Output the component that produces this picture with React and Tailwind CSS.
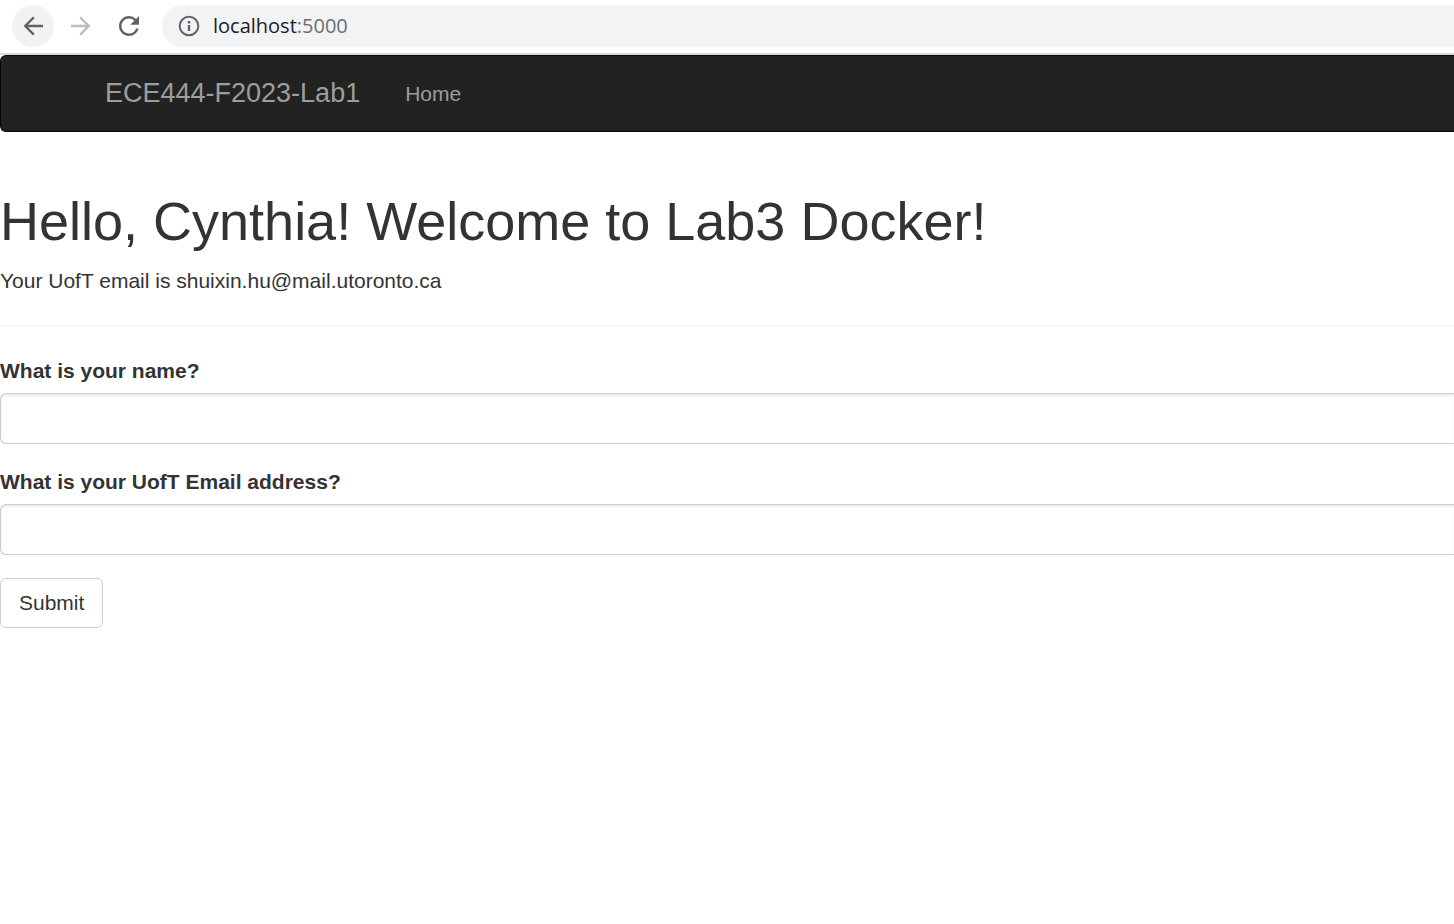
import React from "react";
import { MdRefresh } from "react-icons/md";

function Arrow({ flipped }) {
  return (
    <svg
      viewBox="0 0 30 30"
      className={flipped ? "size-[30px] rotate-180" : "size-[30px]"}
      fill="none"
      stroke="currentColor"
      strokeWidth="2.3"
      aria-hidden="true"
    >
      <path d="M25 15H7.2M15.8 6.4L7.2 15l8.6 8.6" />
    </svg>
  );
}

function InfoIcon() {
  return (
    <svg viewBox="0 0 24 24" className="size-6 shrink-0" fill="none" stroke="currentColor" aria-hidden="true">
      <circle cx="12" cy="12" r="9.3" strokeWidth="2" />
      <path d="M12 11v6M12 7v2.4" strokeWidth="2.4" />
    </svg>
  );
}

function BrowserBar() {
  return (
    <div className="flex items-center border-b-2 border-[#dadada] bg-white pt-[5px] pb-[6px] pl-3 text-[#5f6368]">
      <button
        type="button"
        aria-label="Back"
        className="flex size-[42px] shrink-0 items-center justify-center rounded-full bg-[#f2f2f2]"
      >
        <Arrow />
      </button>
      <button
        type="button"
        aria-label="Forward"
        disabled
        className="ml-1.5 flex size-[42px] shrink-0 items-center justify-center text-[#babcbe]"
      >
        <Arrow flipped />
      </button>
      <button
        type="button"
        aria-label="Reload"
        className="ml-1.5 flex size-[42px] shrink-0 items-center justify-center"
      >
        <MdRefresh className="size-[30px]" />
      </button>
      <div className="ml-3 flex h-[42px] min-w-0 flex-1 items-center gap-3 rounded-l-full bg-[#f1f3f4] pl-[15px]">
        <InfoIcon />
        <span className="font-['Open_Sans',sans-serif] text-xl text-[#202124]">
          localhost<span className="text-[#6b6f73]">:5000</span>
        </span>
      </div>
    </div>
  );
}

function Navbar() {
  return (
    <nav className="flex items-center gap-[45px] rounded-l-md border border-r-0 border-[#080808] bg-[#222222] py-[22px] pl-[104px] text-[#9d9d9d]">
      <a href="#" className="text-[27px] leading-[31px]">
        ECE444-F2023-Lab1
      </a>
      <a href="#" className="leading-[31px]">
        Home
      </a>
    </nav>
  );
}

function Field({ id, label, type }) {
  return (
    <div className="mb-[23px]">
      <label htmlFor={id} className="mb-[7px] block font-bold">
        {label}
      </label>
      <input
        id={id}
        name={id}
        type={type}
        className="block h-[51px] w-full rounded-l-md border border-r-0 border-[#cccccc] bg-white px-[18px] text-[#555555] shadow-[inset_0_2px_2px_rgba(0,0,0,0.075)]"
      />
    </div>
  );
}

export default function App() {
  return (
    <div className="bg-white font-['Liberation_Sans',Arial,sans-serif] text-[21px] leading-[30px] text-[#333333]">
      <BrowserBar />
      <Navbar />
      <main>
        <header className="border-b border-[#eeeeee] pt-[60px] pb-[29px]">
          <h1 className="mb-[15px] text-[54px] leading-[59px]">
            Hello, Cynthia! Welcome to Lab3 Docker!
          </h1>
          <p>Your UofT email is shuixin.hu@mail.utoronto.ca</p>
        </header>
        <form className="pt-[30px]" onSubmit={(e) => e.preventDefault()}>
          <Field id="name" label="What is your name?" type="text" />
          <Field id="email" label="What is your UofT Email address?" type="email" />
          <button
            type="submit"
            className="rounded-md border border-[#cccccc] bg-white px-[18px] py-[9px]"
          >
            Submit
          </button>
        </form>
      </main>
    </div>
  );
}
